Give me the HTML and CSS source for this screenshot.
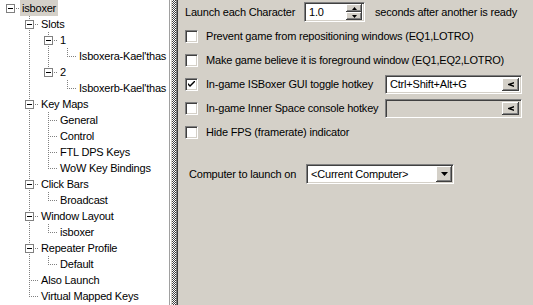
FILE: index.html
```html
<!DOCTYPE html>
<html>
<head>
    <meta charset="UTF-8">
    <title>ISBoxer Configuration</title>
    <link rel="stylesheet" href="styles.css">
</head>
<body>
    <div class="window">
        <div class="tree-pane">
            <ul class="tree">
                <li>
                    <div class="node"><span class="toggle"></span><span class="label selected">isboxer</span></div>
                    <ul>
                        <li>
                            <div class="node"><span class="toggle"></span><span class="label">Slots</span></div>
                            <ul>
                                <li>
                                    <div class="node"><span class="toggle"></span><span class="label">1</span></div>
                                    <ul>
                                        <li><div class="node leaf"><span class="label">Isboxera-Kael'thas</span></div></li>
                                    </ul>
                                </li>
                                <li>
                                    <div class="node"><span class="toggle"></span><span class="label">2</span></div>
                                    <ul>
                                        <li><div class="node leaf"><span class="label">Isboxerb-Kael'thas</span></div></li>
                                    </ul>
                                </li>
                            </ul>
                        </li>
                        <li>
                            <div class="node"><span class="toggle"></span><span class="label">Key Maps</span></div>
                            <ul>
                                <li><div class="node leaf"><span class="label">General</span></div></li>
                                <li><div class="node leaf"><span class="label">Control</span></div></li>
                                <li><div class="node leaf"><span class="label">FTL DPS Keys</span></div></li>
                                <li><div class="node leaf"><span class="label">WoW Key Bindings</span></div></li>
                            </ul>
                        </li>
                        <li>
                            <div class="node"><span class="toggle"></span><span class="label">Click Bars</span></div>
                            <ul>
                                <li><div class="node leaf"><span class="label">Broadcast</span></div></li>
                            </ul>
                        </li>
                        <li>
                            <div class="node"><span class="toggle"></span><span class="label">Window Layout</span></div>
                            <ul>
                                <li><div class="node leaf"><span class="label">isboxer</span></div></li>
                            </ul>
                        </li>
                        <li>
                            <div class="node"><span class="toggle"></span><span class="label">Repeater Profile</span></div>
                            <ul>
                                <li><div class="node leaf"><span class="label">Default</span></div></li>
                            </ul>
                        </li>
                        <li><div class="node leaf"><span class="label">Also Launch</span></div></li>
                        <li><div class="node leaf"><span class="label">Virtual Mapped Keys</span></div></li>
                    </ul>
                </li>
            </ul>
        </div>

        <div class="splitter"></div>

        <div class="settings">
            <div class="row">
                <span class="launch-label">Launch each Character</span>
                <div class="field spin">
                    <span class="field-text">1.0</span>
                    <span class="spin-buttons">
                        <span class="button spin-btn"><svg width="5" height="3" viewBox="0 0 5 3"><path d="M2.5 0 L5 3 L0 3 Z" fill="#000"/></svg></span>
                        <span class="button spin-btn"><svg width="5" height="3" viewBox="0 0 5 3"><path d="M0 0 L5 0 L2.5 3 Z" fill="#000"/></svg></span>
                    </span>
                </div>
                <span class="after-text">seconds after another is ready</span>
            </div>

            <div class="row">
                <span class="checkbox"></span>
                <span class="check-label">Prevent game from repositioning windows (EQ1,LOTRO)</span>
            </div>

            <div class="row">
                <span class="checkbox"></span>
                <span class="check-label">Make game believe it is foreground window (EQ1,EQ2,LOTRO)</span>
            </div>

            <div class="row">
                <span class="checkbox">
                    <svg width="7" height="7" viewBox="0 0 7 7"><path d="M0 2 L0 4 L2 6 L7 1 L7 -1 L2 4 Z" fill="#000"/></svg>
                </span>
                <span class="check-label">In-game ISBoxer GUI toggle hotkey</span>
                <div class="field hotkey">
                    <span class="field-text">Ctrl+Shift+Alt+G</span>
                    <span class="button key-btn"><svg width="6" height="5" viewBox="0 0 6 5"><path d="M6 0 L0 2 L0 3 L6 5 L6 3.6 L3 2.5 L6 1.4 Z" fill="#000"/></svg></span>
                </div>
            </div>

            <div class="row">
                <span class="checkbox"></span>
                <span class="check-label">In-game Inner Space console hotkey</span>
                <div class="field hotkey disabled">
                    <span class="field-text"></span>
                    <span class="button key-btn"><svg width="6" height="5" viewBox="0 0 6 5"><path d="M6 0 L0 2 L0 3 L6 5 L6 3.6 L3 2.5 L6 1.4 Z" fill="#000"/></svg></span>
                </div>
            </div>

            <div class="row">
                <span class="checkbox"></span>
                <span class="check-label">Hide FPS (framerate) indicator</span>
            </div>

            <div class="row computer-row">
                <span class="computer-label">Computer to launch on</span>
                <div class="field combo">
                    <span class="field-text">&lt;Current Computer&gt;</span>
                    <span class="button drop-btn"><svg width="7" height="4" viewBox="0 0 7 4"><path d="M0 0 L7 0 L3.5 4 Z" fill="#000"/></svg></span>
                </div>
            </div>
        </div>
    </div>
</body>
</html>
```

FILE: styles.css
```css
* {
    box-sizing: border-box;
}

body {
    margin: 0;
    padding: 0;
    font-family: "Liberation Sans", Arial, sans-serif;
    font-size: 11px;
    letter-spacing: -0.2px;
    color: #000;
    background: #d4d0c8;
}

.window {
    display: flex;
    width: 533px;
    height: 305px;
    overflow: hidden;
}

/* Tree view */
.tree-pane {
    width: 170px;
    flex: none;
    background: #fff;
    border-right: 1px solid #a0a0a0;
    overflow: hidden;
}

.tree,
.tree ul {
    list-style: none;
    margin: 0;
    padding: 0;
}

.tree ul {
    padding-left: 19px;
}

.tree li {
    position: relative;
}

/* vertical sibling line */
.tree ul > li::before {
    content: "";
    position: absolute;
    left: 10px;
    top: 0;
    bottom: 0;
    width: 1px;
    background: repeating-linear-gradient(to bottom, #808080 0 1px, transparent 1px 2px);
}

.tree ul > li:last-child::before {
    bottom: auto;
    height: 9px;
}

.node {
    position: relative;
    display: flex;
    align-items: center;
    height: 16px;
    padding-left: 6px;
    white-space: nowrap;
}

/* horizontal connector */
.node::before {
    content: "";
    position: absolute;
    left: 11px;
    top: 8px;
    width: 8px;
    height: 1px;
    background: repeating-linear-gradient(to right, transparent 0 1px, #808080 1px 2px);
}

.node.leaf {
    padding-left: 20px;
}

.toggle {
    position: relative;
    z-index: 1;
    flex: none;
    width: 9px;
    height: 9px;
    margin-right: 5px;
    border: 1px solid #808080;
    background: #fff;
}

.toggle::after {
    content: "";
    position: absolute;
    left: 1px;
    top: 3px;
    width: 5px;
    height: 1px;
    background: #000;
}

.label {
    position: relative;
    padding: 0 2px;
    line-height: 16px;
}

.label.selected {
    background: #d4d0c8;
}

/* Splitter */
.splitter {
    width: 8px;
    flex: none;
    background:
        linear-gradient(to right, #fff 0 1px, #d4d0c8 1px 2px, transparent 2px 6px, #808080 6px 7px, #404040 7px 8px),
        repeating-conic-gradient(#404040 0 25%, #fff 0 50%) 0 0 / 2px 2px;
}

/* Settings panel */
.settings {
    flex: 1;
    display: flex;
    flex-direction: column;
    padding: 0 11px 0 7px;
    white-space: nowrap;
}

.row {
    display: flex;
    align-items: center;
    height: 24px;
}

.launch-label {
    width: 119px;
}

.after-text {
    margin-left: 10px;
}

.field {
    display: flex;
    align-items: center;
    background: #fff;
    border: 1px solid;
    border-color: #808080 #fff #fff #808080;
    box-shadow: inset 1px 1px #404040, inset -1px -1px #d4d0c8;
    padding: 2px;
}

.field-text {
    flex: 1;
    padding-left: 2px;
}

.button {
    display: flex;
    align-items: center;
    justify-content: center;
    background: #d4d0c8;
    box-shadow: inset -1px -1px #404040, inset 1px 1px #fff, inset -2px -2px #808080, inset 2px 2px #d4d0c8;
}

.spin {
    width: 61px;
    height: 20px;
}

.spin-buttons {
    display: flex;
    flex-direction: column;
    width: 16px;
    height: 16px;
}

.spin-btn {
    flex: 1;
}

.checkbox {
    display: flex;
    align-items: center;
    justify-content: center;
    flex: none;
    width: 13px;
    height: 13px;
    margin-right: 8px;
    background: #fff;
    border: 1px solid;
    border-color: #808080 #fff #fff #808080;
    box-shadow: inset 1px 1px #404040, inset -1px -1px #d4d0c8;
}

.check-label {
    flex: 1;
}

.hotkey {
    width: 137px;
    height: 19px;
}

.hotkey.disabled {
    background: #d4d0c8;
}

.key-btn {
    width: 17px;
    height: 13px;
}

.computer-row {
    margin-top: 18px;
    padding-left: 4px;
}

.computer-label {
    width: 117px;
}

.combo {
    width: 148px;
    height: 20px;
}

.drop-btn {
    width: 16px;
    height: 16px;
    margin-right: -1px;
}
```
